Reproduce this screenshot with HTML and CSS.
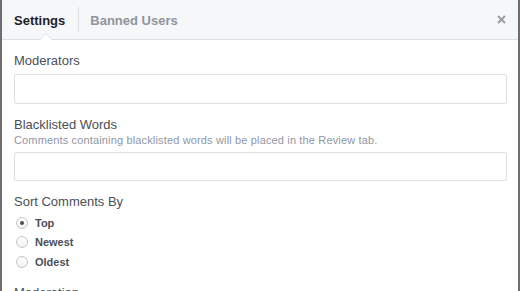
FILE: index.html
```html
<!DOCTYPE html>
<html lang="en">
  <head>
    <meta charset="UTF-8" />
    <title>Settings</title>
    <link rel="stylesheet" href="styles.css">
  </head>
  <body>
    <div class="dialog">
      <header class="tabs">
        <span class="tab tab-active">Settings</span>
        <span class="tab-sep"></span>
        <span class="tab">Banned Users</span>
        <span class="close">
          <svg width="9" height="9" viewBox="0 0 9 9">
            <path d="M1 1 L8 8 M8 1 L1 8" stroke="#9a9da3" stroke-width="2" />
          </svg>
        </span>
      </header>

      <div class="content">
        <div class="field">
          <label class="label">Moderators</label>
          <input class="text-input" type="text" />
        </div>

        <div class="field">
          <label class="label">Blacklisted Words</label>
          <p class="help">Comments containing blacklisted words will be placed in the Review tab.</p>
          <input class="text-input" type="text" />
        </div>

        <div class="field">
          <label class="label">Sort Comments By</label>
          <ul class="radios">
            <li><span class="radio checked"></span>Top</li>
            <li><span class="radio"></span>Newest</li>
            <li><span class="radio"></span>Oldest</li>
          </ul>
        </div>

        <div class="field">
          <label class="label">Moderation</label>
        </div>
      </div>
    </div>
  </body>
</html>
```

FILE: styles.css
```css
body {
  margin: 0;
  padding: 0;
  font-family: "Liberation Sans", Arial, sans-serif;
  background-color: #ffffff;
}

.dialog {
  height: 291px;
  overflow: hidden;
  background-color: #ffffff;
  border-left: 2px solid #6d6e70;
  border-right: 2px solid #6d6e70;
}

.tabs {
  display: flex;
  align-items: center;
  height: 39px;
  padding-left: 12px;
  padding-right: 11px;
  background-color: #f6f7f9;
  border-bottom: 1px solid #dcdee3;
}

.tab {
  position: relative;
  display: flex;
  align-items: center;
  align-self: stretch;
  padding-top: 1px;
  font-size: 13px;
  font-weight: bold;
  color: #90949c;
}

.tab-active {
  color: #1d2129;
  padding-right: 13px;
}

.tab-active::before,
.tab-active::after {
  content: "";
  position: absolute;
  left: 50%;
  bottom: -1px;
  border-style: solid;
  border-color: transparent;
  border-top-width: 0;
}

.tab-active::before {
  margin-left: -7px;
  border-width: 0 7px 7px 7px;
  border-bottom-color: #dcdee3;
}

.tab-active::after {
  margin-left: -6px;
  border-width: 0 6px 6px 6px;
  border-bottom-color: #ffffff;
}

.tab-sep {
  width: 1px;
  height: 25px;
  margin-right: 11px;
  background-color: #dddfe2;
}

.close {
  margin-left: auto;
  margin-right: 1px;
  display: flex;
  align-items: center;
}

.content {
  padding: 13px 11px 0 12px;
}

.field {
  margin-bottom: 13px;
}

.label {
  display: block;
  font-size: 13px;
  line-height: 16px;
  color: #4b4f56;
}

.help {
  margin: 0;
  font-size: 11px;
  line-height: 14px;
  letter-spacing: 0.15px;
  color: #9197a3;
}

.text-input {
  display: block;
  box-sizing: border-box;
  width: 100%;
  height: 30px;
  margin: 5px 0 0;
  border: 1px solid #dddfe2;
  border-radius: 2px;
  background-color: #ffffff;
}

.help + .text-input {
  margin-top: 5px;
  height: 29px;
}

.radios {
  list-style: none;
  margin: 3px 0 0;
  padding: 0;
}

.radios li {
  display: flex;
  align-items: center;
  height: 19.5px;
  font-size: 11px;
  font-weight: bold;
  color: #4b4f56;
}

.radio {
  position: relative;
  box-sizing: border-box;
  width: 12px;
  height: 12px;
  margin: 0 7px 0 2px;
  border: 1px solid #c4c6ca;
  border-radius: 50%;
  background: linear-gradient(#ffffff, #f1f2f4);
}

.radio.checked::after {
  content: "";
  position: absolute;
  left: 3px;
  top: 3px;
  width: 4px;
  height: 4px;
  border-radius: 50%;
  background-color: #4b4f56;
}
```
